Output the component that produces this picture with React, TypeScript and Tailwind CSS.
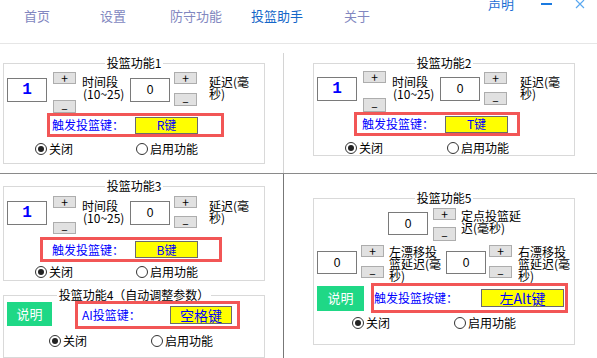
import clsx from "clsx";

function Btn({ label, className }: { label: string; className: string }) {
  return (
    <div
      className={clsx(
        "w-[23px] bg-[#e1e1e1] border border-[#adadad] flex items-center justify-center text-[12px] leading-none text-black",
        className
      )}
    >
      {label}
    </div>
  );
}

function Stepper({
  className,
  plusClass,
  minusClass,
}: {
  className?: string;
  plusClass: string;
  minusClass: string;
}) {
  return (
    <div className={clsx("flex flex-col", className)}>
      <Btn label="+" className={plusClass} />
      <Btn label="–" className={clsx("pt-[2px]", minusClass)} />
    </div>
  );
}

function NumBox({ value, blue, className }: { value: string; blue?: boolean; className?: string }) {
  return (
    <div
      className={clsx(
        "w-[40px] border border-[#7a7a7a] bg-white flex items-center justify-center shrink-0",
        className
      )}
    >
      {blue ? (
        <span className="text-[#0000ff] text-[16px] font-bold font-['Liberation_Mono',monospace]">{value}</span>
      ) : (
        <span className="text-[12px] text-black font-['Liberation_Sans',sans-serif]">{value}</span>
      )}
    </div>
  );
}

function KeyBox({ label, className }: { label: string; className: string }) {
  return (
    <div
      className={clsx(
        "bg-[#ffff00] border border-[#6b6b6b] flex items-center justify-center text-[#0000ff] shrink-0",
        className
      )}
    >
      {label}
    </div>
  );
}

function Radio({ checked, label }: { checked?: boolean; label: string }) {
  return (
    <div className="flex items-center">
      <span className="w-[12px] h-[12px] rounded-full border border-[#333] bg-white flex items-center justify-center">
        {checked && <span className="w-[6px] h-[6px] rounded-full bg-[#222]" />}
      </span>
      <span className="ml-[2px] text-[12px] leading-[14px] text-black">{label}</span>
    </div>
  );
}

function RadioRow({ className, firstW }: { className: string; firstW: string }) {
  return (
    <div className={clsx("flex items-center", className)}>
      <div className={firstW}>
        <Radio checked label="关闭" />
      </div>
      <Radio label="启用功能" />
    </div>
  );
}

function Group({
  title,
  className,
  legendClass = "leading-[16px]",
  children,
}: {
  title: string;
  className?: string;
  legendClass?: string;
  children: React.ReactNode;
}) {
  return (
    <fieldset className={clsx("border border-[#d9d9d9] w-[262px]", className)}>
      <legend align="center" className={clsx("mx-auto px-[2px] text-[12px] text-black", legendClass)}>
        {title}
      </legend>
      {children}
    </fieldset>
  );
}

type ShotProps = {
  title: string;
  keyLabel: string;
  className: string;
  row1: string;
  inputMt: string;
  textMt: string;
  plusL: string;
  minusL: string;
  plusR: string;
  minusR: string;
  delayMl: string;
  red: string;
  labelPl: string;
  radio: string;
  radioW: string;
};

function ShotBox(p: ShotProps) {
  return (
    <Group title={p.title} className={p.className}>
      <div className={clsx("flex items-start", p.row1)}>
        <NumBox value="1" blue className={clsx("ml-[3px] h-[24px]", p.inputMt)} />
        <Stepper className="ml-[6px]" plusClass={p.plusL} minusClass={p.minusL} />
        <div className={clsx("ml-[6px] w-[48px] text-[12px] leading-[12px] text-black", p.textMt)}>
          时间段
          <br />
          <span className="pl-[1px]">(10~25)</span>
        </div>
        <NumBox value="0" className={clsx("h-[24px]", p.inputMt)} />
        <Stepper className="ml-[4px]" plusClass={p.plusR} minusClass={p.minusR} />
        <div className={clsx("text-[12px] leading-[12px] text-black", p.delayMl, p.textMt)}>
          延迟(毫
          <br />
          秒)
        </div>
      </div>
      <div className={clsx("border-[3px] border-[#f25656] flex items-center", p.red, p.labelPl)}>
        <span className="w-[83px] text-[12px] text-[#0000ff] leading-none">触发投篮键：</span>
        <KeyBox label={p.keyLabel} className="w-[63px] h-[17px] text-[12px]" />
      </div>
      <RadioRow className={p.radio} firstW={p.radioW} />
    </Group>
  );
}

export default function App() {
  return (
    <div className="w-[597px] h-[358px] bg-white overflow-hidden font-['Noto_Sans_CJK_SC',sans-serif]">
      <nav className="h-[44px] border-b border-[#e6e6e6] flex items-start pt-[7px] text-[13px] leading-[18px] text-[#8287c0]">
        <span className="ml-[24px]">首页</span>
        <span className="ml-[50px]">设置</span>
        <span className="ml-[44px]">防守功能</span>
        <span className="ml-[29px] text-[#1466c8]">投篮助手</span>
        <span className="ml-[41px]">关于</span>
        <div className="ml-[118px] -mt-[12px] flex items-start">
          <span className="text-[#1c6ed4]">声明</span>
          <span className="ml-[27px] mt-[8px] w-[11px] h-[2px] bg-[#1a7ae0]" />
          <svg className="ml-[23px] mt-[4px]" width="10" height="10" viewBox="0 0 10 10">
            <path d="M1 1 L9 9 M9 1 L1 9" stroke="#5aa8f0" strokeWidth="1.2" fill="none" />
          </svg>
        </div>
      </nav>

      <div className="flex h-[130px] border-b border-[#8a8a8a]">
        <div className="w-[283px]">
          <ShotBox
            title="投篮功能1"
            keyLabel="R键"
            className="ml-[3px] mt-[11px] pb-[7px]"
            row1="h-[42px]"
            inputMt="mt-[7px]"
            textMt="mt-[5px]"
            plusL="h-[12px] mt-[1px]"
            minusL="h-[13px] mt-[16px]"
            plusR="h-[12px] mt-[1px]"
            minusR="h-[13px] mt-[9px]"
            delayMl="ml-[12px]"
            red="ml-[43px] w-[177px] h-[24px]"
            labelPl="pl-[2px]"
            radio="mt-[5px] ml-[31px]"
            radioW="w-[101px]"
          />
        </div>
        <div className="flex-1 mt-[9px] border-l border-[#d4d4d4]">
          <ShotBox
            title="投篮功能2"
            keyLabel="T键"
            className="ml-[29px] mt-[2px]"
            row1="h-[41px]"
            inputMt="mt-[6px]"
            textMt="mt-[5px]"
            plusL="h-[12px]"
            minusL="h-[14px] mt-[15px]"
            plusR="h-[12px] mt-[1px]"
            minusR="h-[13px] mt-[8px]"
            delayMl="ml-[13px]"
            red="ml-[40px] w-[166px] h-[24px]"
            labelPl="pl-[5px]"
            radio="mt-[5px] ml-[31px]"
            radioW="w-[102px]"
          />
        </div>
      </div>

      <div className="flex h-[184px]">
        <div className="w-[283px]">
          <ShotBox
            title="投篮功能3"
            keyLabel="B键"
            className="ml-[3px] mt-[4px] pb-[1px]"
            row1="h-[43px]"
            inputMt="mt-[7px]"
            textMt="mt-[6px]"
            plusL="h-[12px] mt-[2px]"
            minusL="h-[12px] mt-[14px]"
            plusR="h-[12px] mt-[2px]"
            minusR="h-[12px] mt-[8px]"
            delayMl="ml-[12px]"
            red="ml-[36px] w-[182px] h-[25px]"
            labelPl="pl-[9px]"
            radio="mt-[3px] ml-[31px]"
            radioW="w-[101px]"
          />
          <Group title="投篮功能4（自动调整参数）" className="ml-[3px] mt-[8px] pb-[9px]" legendClass="leading-[12px]">
            <div className="flex items-start">
              <div className="ml-[3px] mt-[1px] w-[45px] h-[24px] bg-[#1fd886] text-white text-[13px] flex items-center justify-center">
                说明
              </div>
              <div className="ml-[23px] w-[165px] h-[28px] border-[3px] border-[#f25656] flex items-center pl-[4px]">
                <span className="w-[88px] text-[12px] text-[#0000ff] leading-none">AI投篮键：</span>
                <KeyBox label="空格键" className="w-[62px] h-[18px] text-[14px]" />
              </div>
            </div>
            <RadioRow className="mt-[5px] ml-[45px]" firstW="w-[102px]" />
          </Group>
        </div>
        <div className="flex-1 border-l border-[#777777]">
          <Group title="投篮功能5" className="ml-[29px] mt-[16px] pb-[14px]">
            <div className="flex items-start ml-[74px]">
              <NumBox value="0" className="mt-[6px] h-[23px]" />
              <Stepper className="ml-[5px]" plusClass="h-[12px] mt-[2px]" minusClass="h-[14px] mt-[7px]" />
              <div className="ml-[5px] mt-[4px] text-[12px] leading-[12px] text-black">
                定点投篮延
                <br />
                迟(毫秒)
              </div>
            </div>
            <div className="flex items-start mt-[4px]">
              <NumBox value="0" className="ml-[3px] mt-[6px] h-[23px]" />
              <Stepper className="ml-[4px]" plusClass="h-[12px]" minusClass="h-[12px] mt-[9px]" />
              <div className="ml-[5px] mt-[1px] w-[57px] text-[12px] leading-[12px] text-black">
                左漂移投
                <br />
                篮延迟(毫
                <br />
                秒)
              </div>
              <NumBox value="0" className="mt-[6px] h-[23px]" />
              <Stepper className="ml-[3px]" plusClass="h-[12px]" minusClass="h-[12px] mt-[9px]" />
              <div className="ml-[6px] mt-[1px] text-[12px] leading-[12px] text-black">
                右漂移投
                <br />
                篮延迟(毫
                <br />
                秒)
              </div>
            </div>
            <div className="flex items-center h-[30px] mt-[1px]">
              <div className="ml-[3px] w-[47px] h-[25px] bg-[#1fd886] text-white text-[13px] flex items-center justify-center">
                说明
              </div>
              <div className="ml-[7px] w-[197px] h-[30px] border-[3px] border-[#f25656] flex items-center">
                <span className="w-[107px] text-[12px] text-[#0000ff] leading-none">触发投篮按键：</span>
                <KeyBox label="左Alt键" className="w-[83px] h-[18px] text-[14px]" />
              </div>
            </div>
            <RadioRow className="mt-[3px] ml-[38px]" firstW="w-[102px]" />
          </Group>
        </div>
      </div>
    </div>
  );
}
